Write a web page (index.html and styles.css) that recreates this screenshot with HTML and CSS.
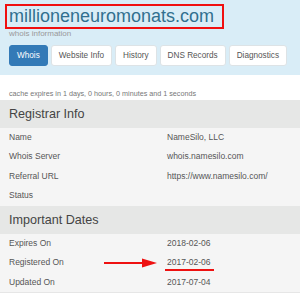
FILE: index.html
```html
<!DOCTYPE html>
<html lang="en">
<head>
    <meta charset="UTF-8">
    <meta name="viewport" content="width=device-width, initial-scale=1.0">
    <title>millioneneuromonats.com whois</title>
    <link rel="stylesheet" href="styles.css">
</head>
<body>
    <div class="hero">
        <h1 class="domain">millioneneuromonats.com</h1>
        <p class="sub">whois information</p>
        <nav class="tabs">
            <a class="tab active">Whois</a>
            <a class="tab">Website Info</a>
            <a class="tab">History</a>
            <a class="tab">DNS Records</a>
            <a class="tab">Diagnostics</a>
        </nav>
    </div>

    <p class="cache">cache expires in 1 days, 0 hours, 0 minutes and 1 seconds</p>

    <div class="panel">
        <h2 class="band">Registrar Info</h2>
        <div class="row"><span>Name</span><span>NameSilo, LLC</span></div>
        <div class="row"><span>Whois Server</span><span>whois.namesilo.com</span></div>
        <div class="row"><span>Referral URL</span><span>https://www.namesilo.com/</span></div>
        <div class="row"><span>Status</span><span></span></div>

        <h2 class="band">Important Dates</h2>
        <div class="row"><span>Expires On</span><span>2018-02-06</span></div>
        <div class="row pointed">
            <span>Registered On</span><span class="marked">2017-02-06</span>
            <!-- red annotation arrow -->
            <svg class="arrow" width="54" height="12" viewBox="0 0 54 12">
                <line x1="0" y1="6" x2="40" y2="6" stroke="#ee1111" stroke-width="2"/>
                <polygon points="38,1.5 53,6 38,10.5" fill="#ee1111"/>
            </svg>
        </div>
        <div class="row"><span>Updated On</span><span>2017-07-04</span></div>
    </div>
</body>
</html>
```

FILE: styles.css
```css
body {
    font-family: 'Liberation Sans', Arial, sans-serif;
    margin: 0;
    padding: 0;
    background: white;
    color: #555;
}
.hero {
    background: #d9edf7;
    padding: 4px 9px 9px 5px;
}
.domain {
    display: inline-block;
    margin: 0;
    padding: 0 8px 0 2px;
    border: 2px solid #f01010;
    font-size: 18px;
    line-height: 21px;
    font-weight: normal;
    color: #31708f;
}
.sub {
    margin: 0 0 7px 4px;
    font-size: 8px;
    line-height: 9px;
    color: #999;
}
.tabs {
    display: flex;
    gap: 3px;
    margin-left: 4px;
}
.tab {
    font-size: 8.2px;
    line-height: 11px;
    padding: 4px 7px;
    border: 1px solid #dde3e6;
    border-radius: 3px;
    background: white;
    color: #555;
}
.tab.active {
    background: #337ab7;
    border-color: #337ab7;
    color: white;
}
.cache {
    margin: 0;
    padding: 14px 9px 0;
    font-size: 7.2px;
    line-height: 10.5px;
    color: #777;
}
.panel {
    background: #f5f5f5;
    border-bottom: 1px solid #e6e6e6;
}
.band {
    margin: 0;
    padding: 0 9px;
    height: 28px;
    line-height: 28px;
    font-size: 12.6px;
    font-weight: normal;
    color: #444;
    background: #e6e7e6;
}
.row {
    display: grid;
    grid-template-columns: 158px 1fr;
    padding: 4px 9px;
    font-size: 8.5px;
    line-height: 11.5px;
    color: #555;
}
.pointed {
    position: relative;
}
.marked {
    position: relative;
    justify-self: start;
}
.marked::after {
    content: "";
    position: absolute;
    left: -2px;
    right: -4px;
    bottom: -2px;
    height: 2px;
    background: #ee1111;
}
.arrow {
    position: absolute;
    left: 104px;
    top: 4px;
}
```
